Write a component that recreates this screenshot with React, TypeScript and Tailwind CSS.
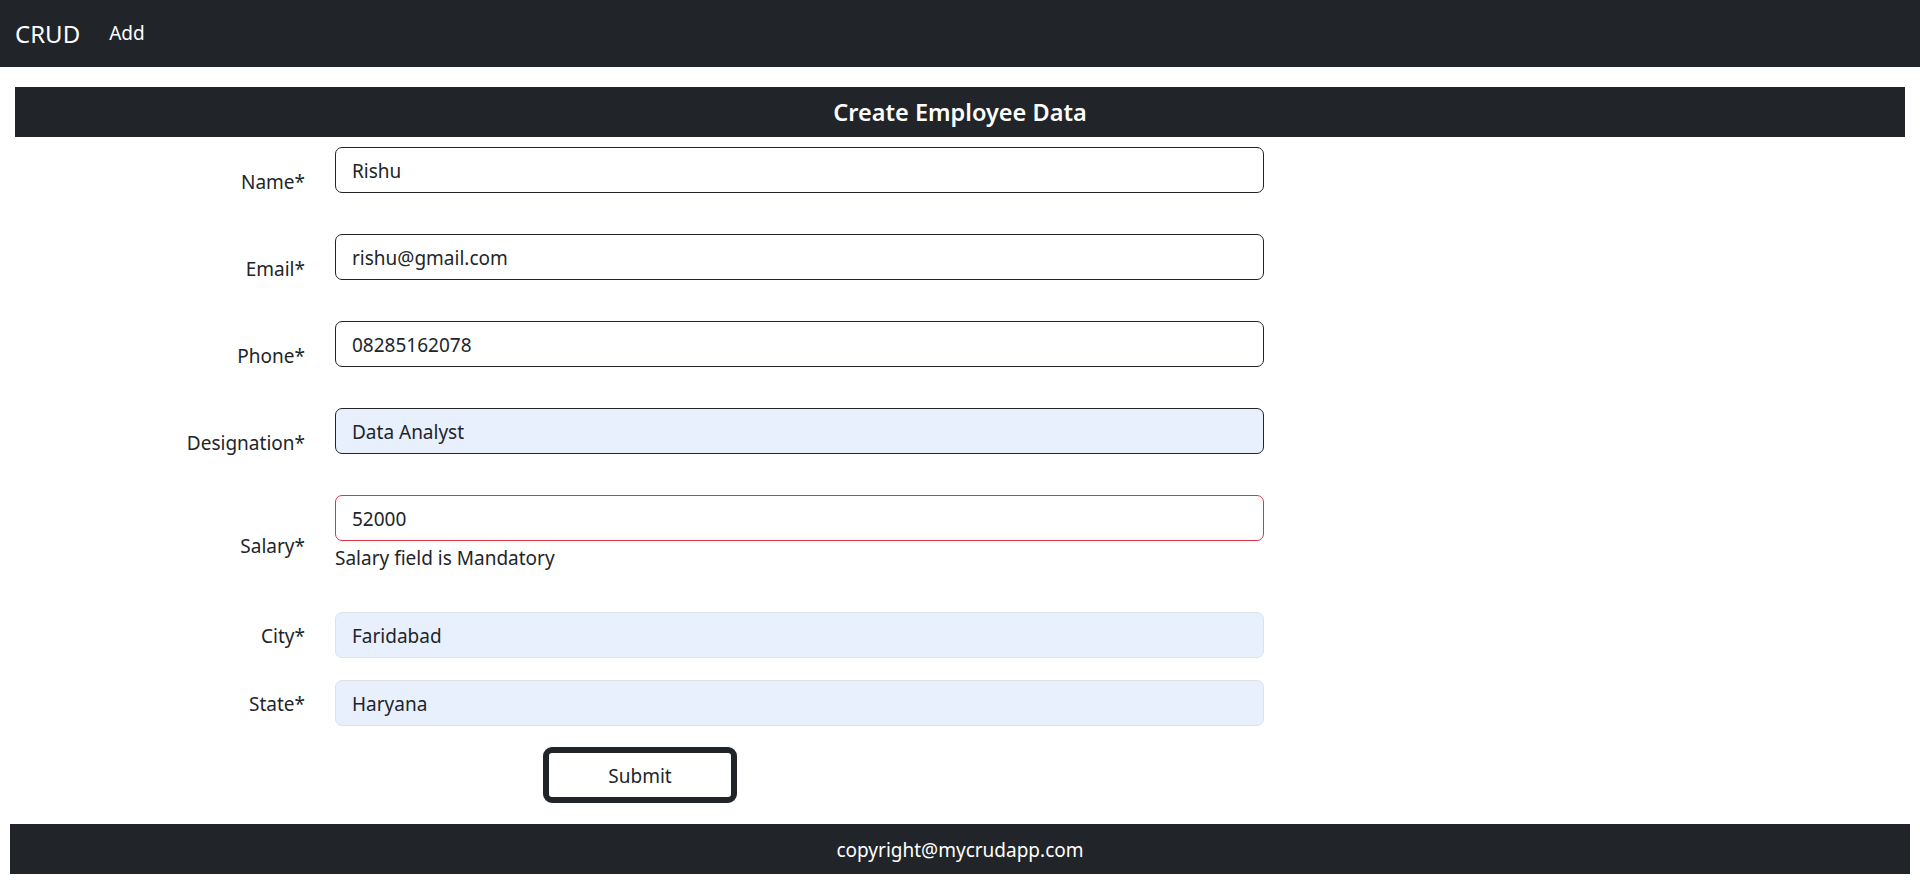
import React from "react";

type RowProps = {
  label: string;
  value: string;
  inputClass: string;
  rowClass: string;
  after?: React.ReactNode;
};

function Row({ label, value, inputClass, rowClass, after }: RowProps) {
  return (
    <div className={`flex items-center ${rowClass}`}>
      <label className="w-[305px] shrink-0 pt-[2px] text-right text-[19px] leading-[30px] text-[#212529]">
        {label}
      </label>
      <div className="ml-[30px] w-[929px] shrink-0">
        <input
          type="text"
          defaultValue={value}
          readOnly
          className={`block h-[46px] w-full rounded-[7px] border px-[16px] pt-[2px] text-[19px] leading-[30px] text-[#212529] outline-none ${inputClass}`}
        />
        {after}
      </div>
    </div>
  );
}

export default function App() {
  return (
    <div className="min-h-[882px] bg-white font-['Noto_Sans',sans-serif] text-[#212529]">
      <nav className="flex h-[67px] items-center bg-[#212529] pl-[15px]">
        <span className="text-[24px] leading-none text-white">CRUD</span>
        <span className="ml-[29px] text-[19px] leading-none text-white">Add</span>
      </nav>

      <div className="px-[15px] pt-[20px]">
        <div className="flex h-[50px] items-center justify-center bg-[#212529] pt-[2px] text-[23.5px] font-semibold text-white">
          Create Employee Data
        </div>
      </div>

      <form className="pt-[10px]" onSubmit={(e) => e.preventDefault()}>
        <Row
          label="Name*"
          value="Rishu"
          inputClass="border-[#212529] bg-white"
          rowClass="mb-[19px]"
          after={<div className="h-[22px]" />}
        />
        <Row
          label="Email*"
          value="rishu@gmail.com"
          inputClass="border-[#212529] bg-white"
          rowClass="mb-[19px]"
          after={<div className="h-[22px]" />}
        />
        <Row
          label="Phone*"
          value="08285162078"
          inputClass="border-[#212529] bg-white"
          rowClass="mb-[19px]"
          after={<div className="h-[22px]" />}
        />
        <Row
          label="Designation*"
          value="Data Analyst"
          inputClass="border-[#212529] bg-[#e8f0fe]"
          rowClass="mb-[19px]"
          after={<div className="h-[22px]" />}
        />
        <Row
          label="Salary*"
          value="52000"
          inputClass="border-[#dc3545] bg-white"
          rowClass="mb-[17px]"
          after={
            <div className="h-[54px] pt-[2px]">
              <div className="text-[19px] leading-[30px] text-[#212529]">Salary field is Mandatory</div>
            </div>
          }
        />
        <Row
          label="City*"
          value="Faridabad"
          inputClass="border-[#dee2e6] bg-[#e8f0fe]"
          rowClass="mb-[22px]"
        />
        <Row
          label="State*"
          value="Haryana"
          inputClass="border-[#dee2e6] bg-[#e8f0fe]"
          rowClass="mb-[21px]"
        />
        <div className="mb-[21px] pl-[543px]">
          <button
            type="submit"
            className="h-[56px] w-[194px] rounded-[9px] border-[6px] border-[#212529] bg-white pt-[2px] text-[19px] leading-[30px] text-[#212529]"
          >
            Submit
          </button>
        </div>
      </form>

      <footer className="mx-[10px] flex h-[50px] items-center justify-center bg-[#212529] pt-[2px] text-[19px] text-white">
        copyright@mycrudapp.com
      </footer>
    </div>
  );
}
